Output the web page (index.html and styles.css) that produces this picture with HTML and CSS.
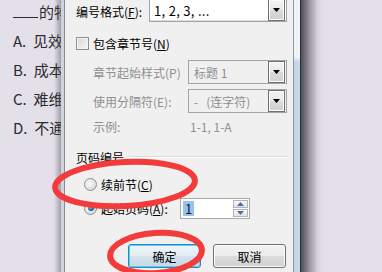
FILE: index.html
```html
<!DOCTYPE html>
<html lang="zh-CN">
<head>
<meta charset="UTF-8">
<title>页码格式</title>
<link rel="stylesheet" href="styles.css">
</head>
<body>
	<div class="screen">
		<div class="doc">
			<p class="first"><span class="blank"></span>的物理</p>
			<p>A.&nbsp; 见效慢</p>
			<p>B.&nbsp; 成本高</p>
			<p>C.&nbsp; 难维护</p>
			<p>D.&nbsp; 不通用</p>
		</div>
		<div class="frame-left"></div>
		<div class="panel">
			<div class="row r-format">
				<span class="label wide-label">编号格式(<u>F</u>):</span>
				<div class="combo combo-top">
					<span class="val num">1, 2, 3, ...</span>
					<span class="drop"><svg width="7" height="4" viewBox="0 0 7 4"><polygon points="0,0 7,0 3.5,4" fill="#000"/></svg></span>
				</div>
			</div>
			<div class="row r-check">
				<span class="checkbox"></span>
				<span class="label">包含章节号(<u>N</u>)</span>
			</div>
			<div class="row r-style">
				<span class="label sub-label off">章节起始样式(P)</span>
				<div class="combo combo-off">
					<span class="val">标题 1</span>
					<span class="drop"><svg width="7" height="4" viewBox="0 0 7 4"><polygon points="0,0 7,0 3.5,4" fill="#000"/></svg></span>
				</div>
			</div>
			<div class="row r-sep">
				<span class="label sub-label off">使用分隔符(E):</span>
				<div class="combo combo-off">
					<span class="val">-&nbsp;&nbsp;&nbsp;(连字符)</span>
					<span class="drop"><svg width="7" height="4" viewBox="0 0 7 4"><polygon points="0,0 7,0 3.5,4" fill="#000"/></svg></span>
				</div>
			</div>
			<div class="row r-sample">
				<span class="label sub-label off">示例:</span>
				<span class="sample off">1-1, 1-A</span>
			</div>
			<div class="row r-group">
				<span class="label">页码编号</span>
				<span class="group-line"></span>
			</div>
			<div class="row r-radio1">
				<span class="radio"></span>
				<span class="label">续前节(<u>C</u>)</span>
			</div>
			<div class="row r-radio2">
				<span class="radio checked"></span>
				<span class="label start-label">起始页码(<u>A</u>):</span>
				<div class="spin">
					<span class="sel">1</span>
					<span class="spin-btns">
						<span class="spin-btn"><svg width="7" height="4" viewBox="0 0 7 4"><polygon points="0,4 7,4 3.5,0" fill="#4a6fa5"/></svg></span>
						<span class="spin-btn"><svg width="7" height="4" viewBox="0 0 7 4"><polygon points="0,0 7,0 3.5,4" fill="#4a6fa5"/></svg></span>
					</span>
				</div>
			</div>
			<div class="row r-buttons">
				<button class="btn btn-default">确定</button>
				<button class="btn">取消</button>
			</div>
		</div>
		<div class="frame-right"></div>
		<div class="shade"></div>
	</div>

	<!-- hand drawn marks over the screenshot -->
	<svg class="marks" width="382" height="272" viewBox="0 0 382 272">
		<ellipse cx="125" cy="184" rx="70" ry="22" transform="rotate(-3 125 184)" />
		<ellipse cx="156" cy="253" rx="46" ry="20" transform="rotate(-4 156 253)" />
	</svg>
</body>
</html>
```

FILE: styles.css
```css
html, body {
	margin: 0;
	overflow: hidden;
}

body {
	width: 382px;
	height: 272px;
	position: relative;
	background: #e4e0ea;
	font-family: "Noto Sans CJK SC", sans-serif;
}

.screen {
	display: flex;
	height: 272px;
}

/* document behind the dialog */
.doc {
	width: 61px;
	flex: none;
	position: relative;
	overflow: hidden;
	box-sizing: border-box;
	padding-left: 13px;
	font-size: 15px;
	color: #2b2b2b;
	white-space: nowrap;
}

.doc p {
	margin: 0;
	line-height: 29px;
}

.doc .first {
	margin-top: -3px;
}

.doc .blank {
	display: inline-block;
	width: 25px;
	border-bottom: 1px solid #2b2b2b;
	margin-right: 1px;
}

.doc::after {
	content: "";
	position: absolute;
	right: 0;
	top: 0;
	bottom: 0;
	width: 7px;
	background: linear-gradient(to right, rgba(80, 76, 90, 0), rgba(80, 76, 90, 0.45));
}

.frame-left {
	width: 3px;
	flex: none;
	background: #cfd3dc;
	border-right: 1px solid #858c96;
}

.frame-right {
	width: 6px;
	flex: none;
	border-left: 1px solid #8f97a1;
	border-right: 1px solid #2e2e33;
	background: linear-gradient(#eef3f8 0, #eef3f8 57px, #c3d6ea 62px, #c3d6ea 100%);
}

.shade {
	width: 22px;
	flex: none;
	background: linear-gradient(to right, #4d4d55, #9a97a2 40%, #d6d2dd 75%, #e4e0ea);
}

/* dialog body */
.panel {
	width: 228px;
	flex: none;
	box-sizing: border-box;
	padding: 0 6px 0 11px;
	background: #f0f0f0;
	font-size: 12px;
	color: #000;
}

.row {
	display: flex;
	align-items: center;
}

.label {
	white-space: nowrap;
}

.off {
	color: #8f8f8f;
}

.r-format {
	height: 22px;
}

.wide-label {
	width: 73px;
	flex: none;
}

.r-check {
	margin-top: 8px;
	height: 26px;
}

.r-style {
	margin-top: 4px;
	height: 24px;
}

.r-sep {
	margin-top: 5px;
	height: 24px;
}

.sub-label {
	width: 95px;
	flex: none;
	margin-left: 17px;
}

.r-sample {
	margin-top: 3px;
	height: 20px;
}

.sample {
	margin-left: 2px;
}

.r-group {
	margin-top: 12px;
	height: 18px;
}

.group-line {
	flex: 1;
	margin-left: 5px;
	height: 0;
	border-top: 1px solid #d5dce2;
	border-bottom: 1px solid #fff;
}

.r-radio1 {
	margin-top: 8px;
	height: 20px;
}

.r-radio2 {
	margin-top: 3px;
	height: 22px;
}

.r-buttons {
	margin-top: 25px;
	height: 24px;
	padding-left: 52px;
	gap: 12px;
}

/* combo boxes */
.combo {
	display: flex;
	align-items: center;
	box-sizing: border-box;
	border: 1px solid #a3a3a3;
	background: #fff;
}

.combo-top {
	width: 138px;
	height: 22px;
	border-top: none;
	box-shadow: inset 0 -1px 0 #dedede;
}

.combo-off {
	width: 99px;
	height: 24px;
	background: #f0f0f0;
	color: #8f8f8f;
}

.combo .val {
	flex: 1;
	padding-left: 4px;
	white-space: nowrap;
	overflow: hidden;
}

.combo .num {
	font-size: 13px;
	letter-spacing: 0.3px;
}

.combo-off .val {
	padding-left: 5px;
}

.drop {
	width: 17px;
	height: 100%;
	box-sizing: border-box;
	border: 1px solid #707070;
	box-shadow: inset 0 0 0 1px #fcfcfc;
	background: linear-gradient(#f3f3f3, #e9e9e9 50%, #dadada 51%, #d0d0d0);
	display: flex;
	align-items: center;
	justify-content: center;
	margin-right: 1px;
}

.combo-top .drop {
	height: 21px;
	border-top: none;
	align-self: flex-start;
}

/* checkbox and radios */
.checkbox {
	width: 13px;
	height: 13px;
	box-sizing: border-box;
	border: 1px solid #8e8f8f;
	background: linear-gradient(135deg, #d8d8d8, #f6f6f6);
	box-shadow: inset 0 0 0 1px #f4f4f4;
	margin-right: 4px;
	flex: none;
}

.radio {
	width: 13px;
	height: 13px;
	box-sizing: border-box;
	border-radius: 50%;
	border: 1px solid #8e8f8f;
	background: radial-gradient(circle at 40% 40%, #fbfbfb, #dcdcdc 70%, #cfcfcf);
	margin-left: 8px;
	margin-right: 4px;
	flex: none;
	position: relative;
}

.radio.checked::after {
	content: "";
	position: absolute;
	left: 2.5px;
	top: 2.5px;
	width: 6px;
	height: 6px;
	border-radius: 50%;
	background: radial-gradient(circle at 40% 35%, #8fd2ff, #1d6fae 55%, #0f3f6e);
}

.start-label {
	width: 79px;
	flex: none;
}

/* spin edit */
.spin {
	width: 70px;
	height: 21px;
	box-sizing: border-box;
	border: 1px solid #a9a9a9;
	background: #fff;
	display: flex;
	align-items: center;
	justify-content: space-between;
	padding: 0 1px 0 2px;
}

.sel {
	background: #93c3ee;
	color: #1a1a1a;
	padding: 0 2px;
	line-height: 15px;
	font-size: 13px;
}

.spin-btns {
	display: flex;
	flex-direction: column;
	gap: 1px;
}

.spin-btn {
	width: 15px;
	height: 8px;
	box-sizing: border-box;
	border: 1px solid #b4b4b4;
	background: linear-gradient(#f8f8f8, #e4e4e4);
	display: flex;
	align-items: center;
	justify-content: center;
}

/* buttons */
.btn {
	width: 73px;
	height: 24px;
	border: 1px solid #707070;
	border-radius: 3px;
	background: linear-gradient(#f2f2f2, #ebebeb 50%, #dddddd 51%, #cfcfcf);
	box-shadow: inset 0 0 0 1px #fbfbfb;
	font-family: "Noto Sans CJK SC", sans-serif;
	font-size: 12px;
	color: #000;
	padding: 0;
}

.btn-default {
	border-color: #3c7fb1;
	box-shadow: inset 0 0 0 1px #48d4fc;
	background: linear-gradient(#eef5fa, #e3edf4 50%, #d4e3ee 51%, #c6d8e6);
}

/* red annotation marks */
.marks {
	position: absolute;
	left: 0;
	top: 0;
	pointer-events: none;
}

.marks ellipse {
	fill: none;
	stroke: #f43b3b;
	stroke-width: 6;
}
```
